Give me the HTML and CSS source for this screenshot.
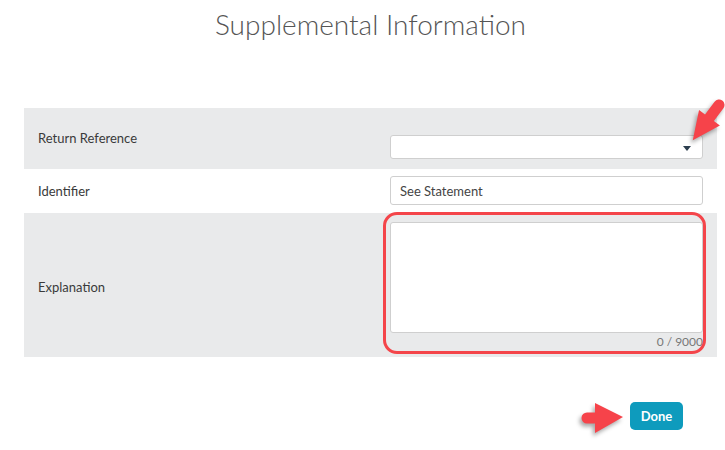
FILE: index.html
```html
<!DOCTYPE html>
<html lang="en">

<head>
    <meta charset="UTF-8">
    <meta name="viewport" content="width=device-width, initial-scale=1.0">
    <title>Supplemental Information</title>
    <link rel="stylesheet" href="styles.css">
</head>

<body>
    <div class="page">
        <h1 class="title">Supplemental Information</h1>

        <div class="form">
            <div class="row row-shaded row-top">
                <div class="label">Return Reference</div>
                <div class="field field-select">
                    <div class="select"><span class="caret"></span></div>
                </div>
            </div>
            <div class="row">
                <div class="label">Identifier</div>
                <div class="field">
                    <input class="input" type="text" value="See Statement">
                </div>
            </div>
            <div class="row row-shaded row-area">
                <div class="label">Explanation</div>
                <div class="field field-area">
                    <textarea class="textarea"></textarea>
                    <div class="counter">0 / 9000</div>
                    <div class="ring"></div>
                </div>
            </div>
        </div>

        <div class="actions">
            <button class="btn-done">Done</button>
        </div>
    </div>

    <!-- annotation arrows -->
    <svg class="marks" width="725" height="450" viewBox="0 0 725 450">
        <g transform="translate(719 105) rotate(126.6)">
            <path d="M0,-5.5 L16,-5.5 L16,-13 L44,0 L16,13 L16,5.5 L0,5.5 A5.5,5.5 0 0 1 0,-5.5 Z" />
        </g>
        <g transform="translate(587 418)">
            <path d="M0,-5.5 L8,-5.5 L8,-15 L36,-1 L8,15 L8,5.5 L0,5.5 A5.5,5.5 0 0 1 0,-5.5 Z" />
        </g>
    </svg>
</body>

</html>
```

FILE: styles.css
```css
* {
    margin: 0;
    padding: 0;
    box-sizing: border-box;
}

body {
    position: relative;
    width: 725px;
    height: 450px;
    background-color: #fff;
    font-family: Lato, "Noto Sans", sans-serif;
    color: #3a3a3a;
    overflow: hidden;
}

.page {
    width: 693px;
    margin-left: 24px;
}

.title {
    padding-top: 7px;
    font-size: 28px;
    line-height: 34px;
    font-weight: 300;
    color: #555;
    text-align: center;
}

.form {
    margin-top: 67px;
}

.row {
    display: grid;
    grid-template-columns: 1fr 313px;
    align-items: center;
    padding: 7px 14px 8px;
}

.row-shaded {
    background-color: #e9eaeb;
}

.row-top {
    align-items: start;
    padding: 22px 14px 10px;
}

.row-area {
    padding: 9px 14px 6px;
}

.label {
    font-size: 13px;
    line-height: 16px;
}

.field {
    position: relative;
}

.field-select {
    padding-top: 5px;
}

.select {
    height: 24px;
    display: flex;
    align-items: center;
    justify-content: flex-end;
    padding-right: 11px;
    background-color: #fff;
    border: 1px solid #cfcfcf;
    border-radius: 3px;
}

.caret {
    width: 0;
    height: 0;
    margin-top: 2px;
    border-left: 4px solid transparent;
    border-right: 4px solid transparent;
    border-top: 5px solid #2c3e4e;
}

.input {
    display: block;
    width: 100%;
    height: 29px;
    padding: 0 9px;
    font: 13px Lato, "Noto Sans", sans-serif;
    color: #444;
    background-color: #fff;
    border: 1px solid #cfcfcf;
    border-radius: 3px;
    outline: none;
}

.textarea {
    display: block;
    width: 100%;
    height: 111px;
    resize: none;
    background-color: #fff;
    border: 1px solid #cfcfcf;
    border-radius: 3px;
    outline: none;
}

.counter {
    text-align: right;
    font-size: 12px;
    line-height: 18px;
    color: #777;
}

.ring {
    position: absolute;
    left: -7px;
    top: -10px;
    width: 323px;
    height: 142px;
    border: 3px solid #f4454a;
    border-radius: 14px;
}

.actions {
    display: flex;
    justify-content: flex-end;
    padding: 45px 34px 0 0;
}

.btn-done {
    width: 53px;
    height: 28px;
    font: bold 13px Lato, "Noto Sans", sans-serif;
    color: #fff;
    background-color: #0e9bbd;
    border: none;
    border-radius: 5px;
}

.marks {
    position: absolute;
    left: 0;
    top: 0;
    pointer-events: none;
    fill: #f6434a;
    filter: drop-shadow(-2px 3px 2px rgba(0, 0, 0, 0.35));
}
```
